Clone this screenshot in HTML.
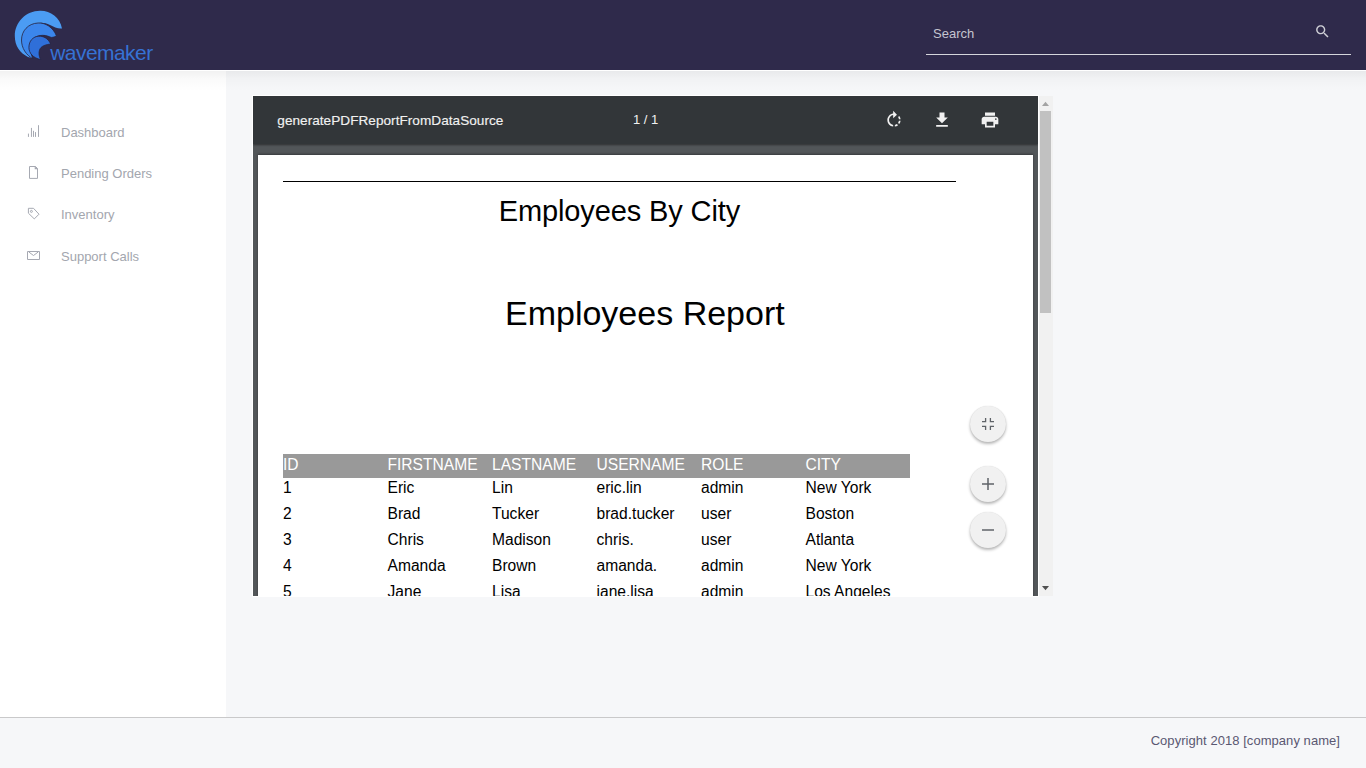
<!DOCTYPE html>
<html><head><meta charset="utf-8">
<style>
*{box-sizing:border-box;margin:0;padding:0}
html,body{width:1366px;height:768px;overflow:hidden;background:#f6f7f9;font-family:"Liberation Sans",sans-serif}
.abs{position:absolute}
#hdr{left:0;top:0;width:1366px;height:70px;background:#2f2a4b}
#side{left:0;top:70px;width:226px;height:647px;background:#fff}
#foot{left:0;top:717px;width:1366px;height:51px;background:#f6f7f9;border-top:1px solid #c9c9ca}
.nav{position:absolute;left:61px;font-size:13px;color:#a3a6ae;white-space:nowrap;line-height:16px}
.ico{position:absolute}
.txt{position:absolute;white-space:nowrap;line-height:1}
#vb{left:252px;top:95px;width:787px;height:502px;background:#fff}
#viewer{left:253px;top:96px;width:785px;height:500px;background:#525659;overflow:hidden}
#tb{left:0;top:0;width:785px;height:48px;background:#323639;box-shadow:0 1px 2px rgba(0,0,0,.45)}
#sb{left:1039px;top:96px;width:14px;height:500px;background:#f1f1f1}
#page{left:5px;top:59px;width:775px;height:600px;background:#fff;box-shadow:0 -1px 2px rgba(0,0,0,.35)}
.c{position:absolute;font-size:15.6px;line-height:1;white-space:nowrap;color:#000}
.h{color:#fff}
.fab{position:absolute;left:717px;width:36px;height:36px;border-radius:50%;background:#f1f1f1;box-shadow:0 2px 3px rgba(0,0,0,.28),0 0 1px rgba(0,0,0,.15)}
</style></head><body>
<div id="hdr" class="abs">
  <svg class="abs" style="left:0;top:0" width="70" height="70" viewBox="0 0 70 70">
    <path d="M62,28.5 C60,17 50,10.5 40,10.8 C26,11 14.8,22 14.8,36 C14.8,46 20,53 28,57 L32,58 C24,50 22,40 26,32 C31,24 40,20 50,25 C54,27 58,29 62,28.5Z" fill="#4b9cf3"/>
    <path d="M56.5,36 C53,27 45,22.5 38,23 C28,23.5 21.5,31 21.5,40 C21.5,48 26,55 33,58.8 C30,52 29,45 32,40 C36,35 44,34 50,37 C52,38 54,37 56.5,36Z" fill="#3b86ec" stroke="#28233f" stroke-width="0.8"/>
    <path d="M50.7,44 C48,38 43,36 38.7,36.2 C33,36.5 28.9,41 28.9,47.5 C28.9,53 33,58 40.8,59.6 C38.5,56 38.3,50.5 41,47.5 C43,45.5 46.5,44.5 50.7,44Z" fill="#2f6fd9" stroke="#28233f" stroke-width="0.8"/>
  </svg>
  <div class="txt" style="left:50.2px;top:42px;font-size:21px;letter-spacing:-0.55px;color:#3672d4">wavemaker</div>
  <div class="txt" style="left:933px;top:27px;font-size:13px;color:#c5c5d0">Search</div>
  <svg class="abs" style="left:1314px;top:23px" width="17" height="17" viewBox="0 0 24 24"><path fill="#cfcfd6" d="M15.5 14h-.79l-.28-.27C15.41 12.59 16 11.11 16 9.5 16 5.91 13.09 3 9.5 3S3 5.91 3 9.5 5.91 16 9.5 16c1.61 0 3.09-.59 4.23-1.57l.27.28v.79l5 4.99L20.49 19l-4.99-5zm-6 0C7.01 14 5 11.99 5 9.5S7.01 5 9.5 5 14 7.01 14 9.5 11.99 14 9.5 14z"/></svg>
  <div class="abs" style="left:926px;top:54px;width:425px;height:1px;background:#d5d5dc"></div>
</div>
<div id="side" class="abs">
  <svg class="abs" style="left:0;top:-70px" width="60" height="300" viewBox="0 0 60 300" fill="none" stroke="#a6a9b2" stroke-width="1">
    <path d="M28.45 136.9V133.6M31.45 136.9V127.9M33.5 136.9V130.8M35.5 136.9V132.1M38.5 136.9V125.2"/>
    <path d="M29.5 166.5H35.5L37.5 168.5V178.4H29.5Z"/><path d="M35.3 166.5V168.7H37.5" stroke-width="1.2"/>
    <path d="M28.4 208.3H33.5L39 214.2L34.3 218.9L28.4 213.2Z"/><circle cx="31.4" cy="211.4" r="1"/>
    <path d="M27.5 251.5H39.5V259.5H27.5Z"/><path d="M28.8 252L33.5 255.5L38.2 252"/>
  </svg>
  <div class="nav" style="top:55px">Dashboard</div>
  <div class="nav" style="top:96px">Pending Orders</div>
  <div class="nav" style="top:137px">Inventory</div>
  <div class="nav" style="top:179px">Support Calls</div>
</div>
<div class="abs" style="left:0;top:70px;width:1366px;height:1px;background:#fff"></div>
<div class="abs" style="left:0;top:71px;width:1366px;height:20px;background:linear-gradient(rgba(0,0,0,0.055),rgba(0,0,0,0.02) 40%,rgba(0,0,0,0))"></div>
<div id="foot" class="abs">
  <div class="txt" style="right:26px;top:16px;font-size:13px;letter-spacing:0.05px;color:#5a5872">Copyright 2018 [company name]</div>
</div>
<div id="vb" class="abs"></div>
<div id="viewer" class="abs">
  <div id="page" class="abs">
    <div class="abs" style="left:25px;top:26px;width:673px;height:1px;background:#000"></div>
    <div class="c" style="left:240.75px;top:42px;font-size:29px;letter-spacing:-0.12px">Employees By City</div>
    <div class="c" style="left:247px;top:141.2px;font-size:34px">Employees Report</div>
    <div class="abs" style="left:25px;top:299px;width:627px;height:24px;background:#999"></div>
    <div class="c h" style="left:25px;top:302px">ID</div>
    <div class="c h" style="left:129.5px;top:302px">FIRSTNAME</div>
    <div class="c h" style="left:234px;top:302px">LASTNAME</div>
    <div class="c h" style="left:338.5px;top:302px">USERNAME</div>
    <div class="c h" style="left:443px;top:302px">ROLE</div>
    <div class="c h" style="left:547.5px;top:302px">CITY</div>
    <div class="c" style="left:25px;top:325px">1</div>
    <div class="c" style="left:129.5px;top:325px">Eric</div>
    <div class="c" style="left:234px;top:325px">Lin</div>
    <div class="c" style="left:338.5px;top:325px">eric.lin</div>
    <div class="c" style="left:443px;top:325px">admin</div>
    <div class="c" style="left:547.5px;top:325px">New York</div>
    <div class="c" style="left:25px;top:351px">2</div>
    <div class="c" style="left:129.5px;top:351px">Brad</div>
    <div class="c" style="left:234px;top:351px">Tucker</div>
    <div class="c" style="left:338.5px;top:351px">brad.tucker</div>
    <div class="c" style="left:443px;top:351px">user</div>
    <div class="c" style="left:547.5px;top:351px">Boston</div>
    <div class="c" style="left:25px;top:377px">3</div>
    <div class="c" style="left:129.5px;top:377px">Chris</div>
    <div class="c" style="left:234px;top:377px">Madison</div>
    <div class="c" style="left:338.5px;top:377px">chris.</div>
    <div class="c" style="left:443px;top:377px">user</div>
    <div class="c" style="left:547.5px;top:377px">Atlanta</div>
    <div class="c" style="left:25px;top:403px">4</div>
    <div class="c" style="left:129.5px;top:403px">Amanda</div>
    <div class="c" style="left:234px;top:403px">Brown</div>
    <div class="c" style="left:338.5px;top:403px">amanda.</div>
    <div class="c" style="left:443px;top:403px">admin</div>
    <div class="c" style="left:547.5px;top:403px">New York</div>
    <div class="c" style="left:25px;top:429px">5</div>
    <div class="c" style="left:129.5px;top:429px">Jane</div>
    <div class="c" style="left:234px;top:429px">Lisa</div>
    <div class="c" style="left:338.5px;top:429px">jane.lisa</div>
    <div class="c" style="left:443px;top:429px">admin</div>
    <div class="c" style="left:547.5px;top:429px">Los Angeles</div>
  </div>
  <div id="tb" class="abs">
    <div class="txt" style="left:24.3px;top:18px;font-size:13.6px;letter-spacing:0.03px;-webkit-text-stroke:0.15px #f1f1f1;color:#f1f1f1">generatePDFReportFromDataSource</div>
    <div class="txt" style="left:380px;top:17px;font-size:13px;color:#f1f1f1">1 / 1</div>
    <svg class="abs" style="left:631px;top:14px" width="20" height="20" viewBox="0 0 24 24"><path fill="#f1f1f1" d="M15.55 5.55L11 1v3.07C7.06 4.56 4 7.92 4 12s3.05 7.44 7 7.93v-2.02c-2.84-.48-5-2.94-5-5.91s2.16-5.43 5-5.91V10l4.55-4.45zM19.93 11c-.17-1.39-.72-2.73-1.62-3.89l-1.42 1.42c.54.75.88 1.6 1.02 2.47h2.02zM13 17.9v2.02c1.39-.17 2.74-.71 3.9-1.61l-1.44-1.44c-.75.54-1.59.89-2.46 1.03zm3.89-2.42l1.42 1.41c.9-1.16 1.45-2.5 1.62-3.89h-2.02c-.14.87-.48 1.72-1.02 2.480z"/></svg>
    <svg class="abs" style="left:679px;top:14px" width="20" height="20" viewBox="0 0 24 24"><path fill="#f1f1f1" d="M19 9h-4V3H9v6H5l7 7 7-7zM5 18v2h14v-2H5z"/></svg>
    <svg class="abs" style="left:727px;top:14px" width="20" height="20" viewBox="0 0 24 24"><path fill="#f1f1f1" d="M19 8H5c-1.66 0-3 1.340-3 3v6h4v4h12v-4h4v-6c0-1.66-1.34-3-3-3zm-3 11H8v-5h8v5zm3-7c-.55 0-1-.45-1-1s.45-1 1-1 1 .45 1 1-.45 1-1 1zm-1-9H6v4h12V3z"/></svg>
  </div>
  <div class="fab" style="top:310px"><svg class="abs" style="left:0;top:0" width="36" height="36" viewBox="0 0 36 36"><path fill="none" stroke="#5f6368" stroke-width="1.3" d="M12 15.6H15.6V12M20.4 12V15.6H24M12 20.4H15.6V24M20.4 24V20.4H24"/></svg></div>
  <div class="fab" style="top:370px"><svg class="abs" style="left:6px;top:6px" width="24" height="24" viewBox="0 0 24 24"><path fill="#5f6368" d="M12.75 6h-1.5v5.25H6v1.5h5.25V18h1.5v-5.25H18v-1.5h-5.25z"/></svg></div>
  <div class="fab" style="top:416px"><svg class="abs" style="left:6px;top:6px" width="24" height="24" viewBox="0 0 24 24"><path fill="#5f6368" d="M6 11.25h12v1.5H6z"/></svg></div>
</div>
<div id="sb" class="abs">
  <div class="abs" style="left:1px;top:15px;width:11px;height:202px;background:#c1c1c1"></div>
  <svg class="abs" style="left:0;top:0" width="14" height="15" viewBox="0 0 14 15"><path d="M3 10H10L6.5 5.7Z" fill="#a3a3a3"/></svg>
  <svg class="abs" style="left:0;top:485px" width="14" height="15" viewBox="0 0 14 15"><path d="M3 5H10L6.5 9.3Z" fill="#505050"/></svg>
</div>
</body></html>
